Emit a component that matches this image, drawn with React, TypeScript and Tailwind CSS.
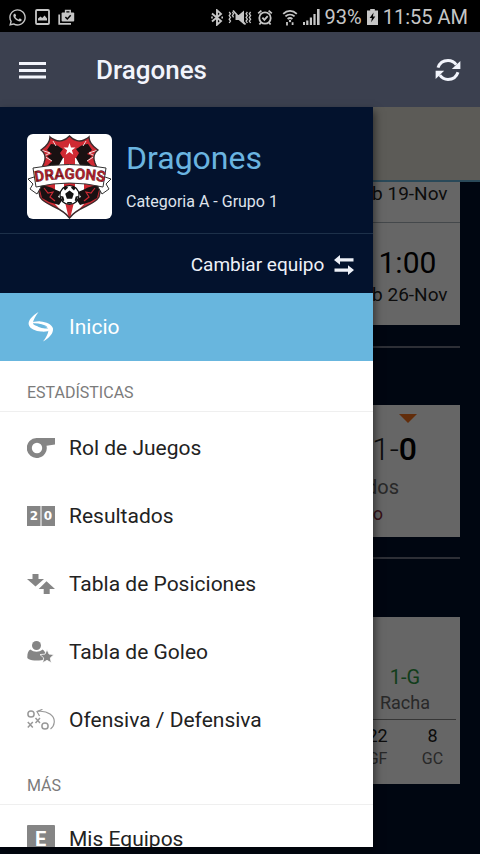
import type { ReactNode } from 'react'
import { FaWhatsapp } from 'react-icons/fa'

function StatusBar() {
  return (
    <div className="flex h-8 shrink-0 items-center justify-between bg-black pt-0.5 pr-3 pl-2 text-[#c6c6c6]">
      <div className="flex items-center gap-2">
        <FaWhatsapp size={19} />
        <svg width="15" height="16" viewBox="0 0 15 16" fill="none">
          <rect x="1" y="1" width="13" height="14" rx="1" stroke="currentColor" strokeWidth="1.8" />
          <path d="M3 11.5V9.500L5.500 7.500 7.200 9 9.600 6.500 12 9.500V11.500Z" fill="currentColor" />
        </svg>
        <svg width="17" height="16" viewBox="0 0 17 16" fill="none">
          <path d="M1.2 5.5V14.8H13" stroke="currentColor" strokeWidth="1.7" />
          <rect x="3.6" y="3.6" width="12.6" height="9" rx="1" fill="currentColor" />
          <path d="M7.6 4V1.6h4.6V4" stroke="currentColor" strokeWidth="1.5" />
          <path d="m7.4 8 1.9 2 3.4-3.8" stroke="#000" strokeWidth="1.5" />
        </svg>
      </div>

      <div className="flex items-center gap-[5px]">
        <svg width="12" height="17" viewBox="0 0 12 17" fill="none" stroke="currentColor" strokeWidth="1.9">
          <path d="m1 4.5 9 7.6-4 3.6V1.3l4 3.6-9 7.6" />
          <path d="M.2 8.5h1.6M10.4 8.5H12" />
        </svg>
        <svg width="24" height="17" viewBox="0 0 24 17" fill="none" stroke="currentColor" strokeWidth="1.3">
          <path d="m1.2 3 1.3 1.8L1.2 6.6l1.3 1.8-1.3 1.8L2.5 12l-1.3 2M4.4 3l1.2 1.8-1.2 1.8 1.2 1.8M19.4 3l-1.3 1.8 1.3 1.8-1.3 1.8 1.3 1.8-1.3 1.8 1.3 2M22.6 3l-1.3 1.8 1.3 1.8-1.3 1.8 1.3 1.8-1.3 1.8 1.3 2" />
          <path d="M7.5 6h3.2L16 1.6v14L10.7 11H7.5Z" fill="currentColor" stroke="none" />
          <path d="m5 1.5 12.5 14" strokeWidth="1.8" />
        </svg>
        <svg width="16" height="17" viewBox="0 0 16 17" fill="none" stroke="currentColor" strokeWidth="1.8">
          <circle cx="8" cy="9" r="5.7" />
          <path d="M1.2 4.4 4.4 1.6M14.8 4.4l-3.2-2.8M5.4 8.6l2 2.2 3.3-3.6M4 13.5l-1.6 2M12 13.5l1.6 2" />
        </svg>
        <svg className="ml-1" width="16" height="17" viewBox="0 0 16 17" fill="none" stroke="currentColor" strokeWidth="1.8">
          <path d="M1.2 4.8c4-3.8 9.6-3.8 13.6 0M3.4 7.4c2.7-2.5 6.5-2.5 9.2 0M5.6 10c1.5-1.3 3.3-1.3 4.8 0" />
          <circle cx="8" cy="12" r="1.2" fill="currentColor" stroke="none" />
          <path d="M5 13v3.4M10.6 13.2v2.8" />
        </svg>
        <svg width="17" height="16" viewBox="0 0 17 16" fill="currentColor">
          <path d="M0 13h2v3H0zM3.2 11.5h2.2V16H3.2zM6.8 8.5H9V16H6.8zM10.4 5h2.2v11h-2.2zM14 0h2.6v16H14z" />
        </svg>
        <span className="text-xl leading-6">93%</span>
        <svg width="11" height="16" viewBox="0 0 11 16">
          <path d="M3.2 0h4.6v1.6H11V16H0V1.6h3.2Z" fill="currentColor" />
          <path d="M6.6 3.6 2.6 9h2.3l-.8 4.2 4.2-5.7H5.9Z" fill="#000" />
        </svg>
        <span className="text-xl leading-6">11:55 AM</span>
      </div>
    </div>
  )
}

function AppHeader() {
  return (
    <header className="flex h-[75px] shrink-0 items-center bg-[#3b404f] px-[19px] text-[#f2f4fc]">
      <button type="button" aria-label="Menú">
        <svg width="27" height="20" viewBox="0 0 27 20" fill="currentColor">
          <path d="M0 2h27v3H0zM0 9h27v3H0zM0 15.6h27v3H0z" />
        </svg>
      </button>
      <h1 className="ml-[50px] flex-1 text-[26px] leading-8 font-medium">Dragones</h1>
      <button type="button" aria-label="Actualizar">
        <svg width="26" height="24" viewBox="0 0 26 24" fill="none" stroke="currentColor" strokeWidth="3">
          <path d="M3 9.6C4.6 4.8 8.4 2.4 13 2.4c3.6 0 6.4 1.6 8.2 4.4" />
          <path d="M25.4 3v8h-8.6Z" fill="currentColor" stroke="none" />
          <path d="M23 14.2c-1.6 4.8-5.4 7.2-10 7.2-3.6 0-6.4-1.6-8.2-4.4" />
          <path d="M.6 21v-8.2h8.6Z" fill="currentColor" stroke="none" />
        </svg>
      </button>
    </header>
  )
}

function Dashboard() {
  return (
    <main className="h-full overflow-hidden bg-[#00102b] text-[#222]">
      <div className="h-[75px] border-b-2 border-[#6ab7df] bg-[#e6e4da]" />

      <div className="px-5">
        <section className="flex h-[143px] flex-col items-end bg-white text-center">
          <div className="flex h-[41px] w-full justify-end border-b border-[#aab4bb]">
            <p className="w-[122px] text-[19px] leading-6">Sáb 19-Nov</p>
          </div>
          <div className="w-[122px] pt-5">
            <p className="text-3xl leading-10 text-black">11:00</p>
            <p className="text-[19px] leading-6">Sáb 26-Nov</p>
          </div>
        </section>

        <hr className="mt-[21px] border-t-2 border-[#707787]" />

        <section className="mt-[57px] flex h-[132px] flex-col items-end bg-white pt-2">
          <svg className="mr-[43px]" width="18" height="10" viewBox="0 0 18 10">
            <path d="M0 1h18L9 10Z" fill="#f5701c" />
          </svg>
          <p className="mr-[43px] text-[32px] leading-[52px] font-light">
            1-<span className="font-medium text-black">0</span>
          </p>
          <p className="mr-[61px] text-xl leading-6 text-[#666]">Dorados</p>
          <p className="mr-[77px] text-lg leading-[30px] text-[#8a2c3a]">Campo</p>
        </section>

        <hr className="mt-5 border-t-2 border-[#707787]" />

        <section className="mt-[58px] flex h-[167px] flex-col bg-white pt-12">
          <div className="ml-auto w-1/4 text-center">
            <p className="text-xl leading-6 text-[#2e9a44]">1-G</p>
            <p className="text-lg leading-7 text-[#666]">Racha</p>
          </div>
          <div className="mx-1 mt-0.5 border-t border-[#888]" />
          <dl className="flex justify-end pt-1 text-center">
            <div className="flex w-1/8 flex-col-reverse">
              <dt className="text-base leading-[22px] text-[#666]">GF</dt>
              <dd className="text-lg leading-6">22</dd>
            </div>
            <div className="flex w-1/8 flex-col-reverse">
              <dt className="text-base leading-[22px] text-[#666]">GC</dt>
              <dd className="text-lg leading-6">8</dd>
            </div>
          </dl>
        </section>
      </div>
    </main>
  )
}

function TeamCrest() {
  return (
    <svg className="size-[85px] shrink-0 rounded-md bg-white" viewBox="0 0 85 85">
      <defs>
        <path id="ribbon-line" d="M9 48Q42.500 42 77 48" />
        <clipPath id="shield">
          <path d="M42.500 2C38 7 32 8 28 6 26 5 24 4 23 3c0 5-3 9-9 13 5 4 5 8 3 13-5 10-7 23-4 34 5 9 21 9 29.500 21 8.500-12 24.500-12 29.500-21 3-11 1-24-4-34-2-5-2-9 3-13-6-4-9-8-9-13-1 1-3 2-5 3-4 2-10 1-14.500-4Z" />
        </clipPath>
      </defs>
      <g clipPath="url(#shield)">
        <path d="M0 0h85v85H0z" fill="#cf2a33" />
        <path d="M0 56c10 10 20 14 27 16l15 13H0ZM85 56c-10 10-20 14-27 16L43 85h42Z" fill="#fff" />
        <path d="M28 24h9v40l5 21L28 70ZM57 24h-9v40l-5 21 14-15Z" fill="#fff" />
        <path d="M24 10c6 0 8 3 12 5l-3 4 3 5-5 9H19l6-6-5-5 5-2-5-4ZM61 10c-6 0-8 3-12 5l3 4-3 5 5 9h12l-6-6 5-5-5-2 5-4Z" fill="#191112" />
        <path d="M11 48c3 5 10 3 16 7l7 3-3 5 5 2-4 6-10-3-7-4ZM74 48c-3 5-10 3-16 7l-7 3 3 5-5 2 4 6 10-3 7-4Z" fill="#191112" />
        <path d="M17 54l4 5 5-1-3 5 5 4M68 54l-4 5-5-1 3 5-5 4" fill="none" stroke="#c92a33" strokeWidth="1.200" />
        <path d="M14 16l9 3-6 3 8 5M71 16l-9 3 6 3-8 5M26 7l3 5M59 7l-3 5" fill="none" stroke="#efd9d9" strokeWidth="1" />
      </g>
      <path d="M42.500 2C38 7 32 8 28 6 26 5 24 4 23 3c0 5-3 9-9 13 5 4 5 8 3 13-5 10-7 23-4 34 5 9 21 9 29.500 21 8.500-12 24.500-12 29.500-21 3-11 1-24-4-34-2-5-2-9 3-13-6-4-9-8-9-13-1 1-3 2-5 3-4 2-10 1-14.500-4Z" fill="none" stroke="#3b2a2c" strokeWidth="1.400" />
      <path d="m42.500 9 1.500 4.500h4.500l-3.600 2.800 1.400 4.500-3.800-2.700-3.800 2.700 1.400-4.500-3.600-2.800H41Z" fill="#fff" />
      <path d="M10 42 1 45l5 5-3 5 7 5 4-7ZM75 42l9 3-5 5 3 5-7 5-4-7Z" fill="#fff" stroke="#333" strokeWidth="1" />
      <path d="M6 34Q42.500 27 79 34l-3 19Q42.500 45 9 53Z" fill="#fff" stroke="#333" strokeWidth="1" />
      <text fill="#b81f2c" stroke="#3e0c12" strokeWidth=".4" fontSize="15" fontWeight="700">
        <textPath href="#ribbon-line" startOffset="50%" textAnchor="middle">
          DRAGONS
        </textPath>
      </text>
      <circle cx="42.500" cy="61" r="9.500" fill="#fff" stroke="#111" strokeWidth="1.200" />
      <path d="m42.500 56.500 4.300 3.200-1.700 5h-5.200l-1.700-5ZM36 53.500l4-1.300 1 1.600-3 2.600ZM49 53.500l-4-1.300-1 1.600 3 2.600ZM33.800 62l2.500.6 1 3.600-1.500 1.200ZM51.200 62l-2.500.6-1 3.600 1.500 1.200ZM40.500 68h4l1 1.800h-6Z" fill="#111" />
    </svg>
  )
}

type MenuItemProps = { icon: ReactNode; label: string; active?: boolean }

function MenuItem({ icon, label, active }: MenuItemProps) {
  return (
    <a
      href="#"
      className={`flex h-[68px] shrink-0 items-center gap-[14px] px-[27px] text-[21px] leading-7 ${
        active ? 'bg-[#68b6de] text-white' : 'text-[#222]'
      }`}
    >
      <span className="w-7 shrink-0 text-[#858585]">{icon}</span>
      {label}
    </a>
  )
}

function SectionTitle({ children }: { children: ReactNode }) {
  return (
    <h3 className="h-[51px] shrink-0 border-b border-[#efefef] px-[27px] pt-5 text-base leading-6 text-[#7b7b7b]">
      {children}
    </h3>
  )
}

const swirlIcon = (
  <svg width="28" height="30" viewBox="0 0 28 30" fill="#fff">
    <path d="M11.500 0C5 4 1 8.500 1.700 12.500 2.500 17 9 19.200 14 19.600c4.500.3 7.500-.2 9.800-1.800-1-3-5.200-3.200-10-3.500-4.300-.3-7.600-1-7.800-3C6 8 8.500 4 11.500 0Z" />
    <path d="M16 29.500C22 26 26.500 21.500 26 16.500 25 12 19 9.800 13.500 9.400 9.500 9.200 5.500 9.800 4 11.800c3-.8 7-.4 10.500.4 4.500 1 7.300 2.800 7 5.800-.3 3.800-2.500 8-5.500 11.500Z" />
    <path d="M8 12.300c4-.6 10 .6 13.200 4.200-4.500.3-10.200-.6-13.200-4.200Z" fill="#68b6de" />
  </svg>
)

const whistleIcon = (
  <svg width="28" height="20" viewBox="0 0 28 20">
    <path d="M10 0h18v6.500l-8.500 1.200A10 10 0 1 1 10 0Z" fill="currentColor" />
    <circle cx="10" cy="10" r="5.200" fill="#fff" />
  </svg>
)

const scoreIcon = (
  <svg width="28" height="20" viewBox="0 0 28 20">
    <path d="M0 0h13.500v20H0zM14.500 0H28v20H14.500z" fill="currentColor" />
    <g className="font-['DejaVu_Sans',sans-serif]" fontSize="12" fontWeight="700" fill="#fff" textAnchor="middle">
      <text x="7" y="14">2</text>
      <text x="21" y="14">0</text>
    </g>
  </svg>
)

const standingsIcon = (
  <svg width="28" height="20" viewBox="0 0 28 20" fill="currentColor">
    <path d="M5.500 0h6v5H17l-8.500 7.500L0 5h5.500ZM19.500 7.200 28 15h-5.300v5h-6v-5h-5Z" />
  </svg>
)

const scorerIcon = (
  <svg width="28" height="22" viewBox="0 0 28 22">
    <circle cx="9.500" cy="4.500" r="4.500" fill="currentColor" />
    <path d="M3.500 8.500c3.500 3 8.500 3 12 0 1.500.6 2.500 2.300 3 4.500v5c-5 2-13 2-17 0-1-.5-1.200-1-1.200-2 .1-3.800.9-6.500 3.200-7.500Z" fill="currentColor" />
    <path d="m20 8.500 2 4.600 5 .5-3.700 3.300 1 4.900-4.300-2.500-4.300 2.500 1-4.900-3.700-3.300 5-.5Z" fill="currentColor" stroke="#fff" strokeWidth=".8" />
  </svg>
)

const tacticsIcon = (
  <svg width="28" height="22" viewBox="0 0 28 22" fill="none" stroke="#999" strokeWidth="1.500">
    <circle cx="4" cy="5" r="3.100" />
    <circle cx="18" cy="17" r="3.100" />
    <path d="m.8 13 5 5.500m0-5.500-5 5.500M8.500 9l4.500 5m0-5-4.500 5" />
    <path d="M10 2.500C21 1 28 7 27.200 13.500c-.3 3-1.500 5-3.700 6.500M15.500.3 10 2.500 12.500 7" strokeWidth="1.200" />
  </svg>
)

const teamsIcon = (
  <svg width="28" height="28" viewBox="0 0 28 28">
    <rect width="28" height="28" rx="1" fill="currentColor" />
    <text x="13.500" y="21" textAnchor="middle" fontSize="20" fontWeight="700" fill="#fff">E</text>
  </svg>
)

function Drawer() {
  return (
    <nav className="absolute top-0 bottom-[7px] left-0 flex w-7/9 flex-col overflow-hidden bg-white shadow-[2px_4px_8px_rgba(0,0,0,0.5)]">
      <div className="flex h-[127px] shrink-0 items-center gap-[14px] border-b border-[#1d3049] bg-[#03122d] px-[27px] pb-3.5 pt-[26px]">
        <TeamCrest />
        <div>
          <h2 className="text-[32px] leading-10 text-[#6ab4e0]">Dragones</h2>
          <p className="mt-3 text-base leading-6 text-[#dfe3ec]">Categoria A - Grupo 1</p>
        </div>
      </div>
      <button
        type="button"
        className="flex h-[59px] shrink-0 items-center justify-end gap-2.5 bg-[#03122d] pt-0.5 pr-[19px] text-[19px] leading-6 text-[#eef1f8]"
      >
        Cambiar equipo
        <svg width="20" height="20" viewBox="0 0 20 20" fill="currentColor">
          <path d="M6 0v3.200h13.500v3.400H6v3.200L0 4.900ZM14 10.200v3.200H.5v3.400H14V20l6-4.900Z" />
        </svg>
      </button>

      <MenuItem icon={swirlIcon} label="Inicio" active />

      <SectionTitle>ESTADÍSTICAS</SectionTitle>
      <div className="shrink-0 pt-0.5">
        <MenuItem icon={whistleIcon} label="Rol de Juegos" />
        <MenuItem icon={scoreIcon} label="Resultados" />
        <MenuItem icon={standingsIcon} label="Tabla de Posiciones" />
        <MenuItem icon={scorerIcon} label="Tabla de Goleo" />
        <MenuItem icon={tacticsIcon} label="Ofensiva / Defensiva" />
      </div>

      <SectionTitle>MÁS</SectionTitle>
      <MenuItem icon={teamsIcon} label="Mis Equipos" />
    </nav>
  )
}

export default function App() {
  return (
    <div className="flex h-screen flex-col overflow-hidden bg-black font-['Roboto',sans-serif]">
      <StatusBar />
      <AppHeader />
      <div className="relative min-h-0 flex-1">
        <Dashboard />
        <div className="absolute inset-0 bg-black/60" />
        <Drawer />
      </div>
    </div>
  )
}
